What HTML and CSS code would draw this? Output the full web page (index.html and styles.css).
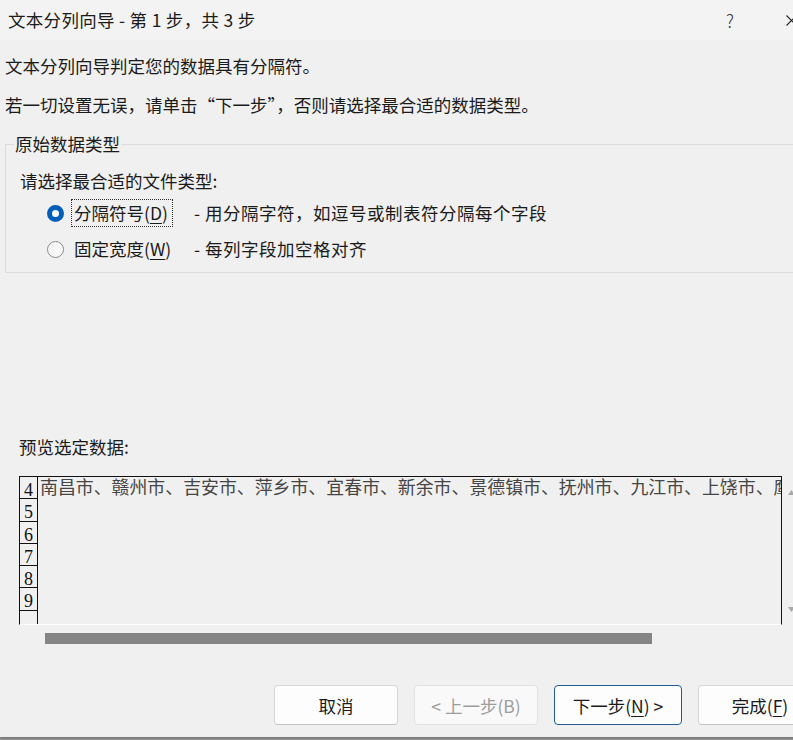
FILE: index.html
```html
<!DOCTYPE html>
<html lang="zh-CN">
<head>
    <meta charset="UTF-8">
    <title>文本分列向导 - 第 1 步，共 3 步</title>
    <link rel="stylesheet" href="styles.css">
</head>
<body>

<div class="dialog">
    <div class="titlebar">
        <span class="title">文本分列向导 - 第 1 步，共 3 步</span>
        <span class="tb-btn help">?</span>
        <span class="tb-btn close">
            <svg class="close-icon" width="11" height="11" viewBox="0 0 11 11"><path d="M0.5 0.5 L10.5 10.5 M10.5 0.5 L0.5 10.5" stroke="#222" stroke-width="1.1" fill="none"/></svg>
        </span>
    </div>

    <div class="content">
        <p class="line first">文本分列向导判定您的数据具有分隔符。</p>
        <p class="line">若一切设置无误，请单击“下一步”，否则请选择最合适的数据类型。</p>

        <fieldset class="group">
            <legend>原始数据类型</legend>
            <div class="prompt">请选择最合适的文件类型:</div>
            <div class="option">
                <span class="radio checked"></span>
                <span class="opt-label focused">分隔符号(<u>D</u>)</span>
                <span class="opt-desc">- 用分隔字符，如逗号或制表符分隔每个字段</span>
            </div>
            <div class="option">
                <span class="radio"></span>
                <span class="opt-label">固定宽度(<u>W</u>)</span>
                <span class="opt-desc">- 每列字段加空格对齐</span>
            </div>
        </fieldset>

        <div class="preview-label">预览选定数据:</div>

        <div class="preview-wrap">
            <div class="preview">
                <div class="row"><span class="num">4</span><span class="cell">南昌市、赣州市、吉安市、萍乡市、宜春市、新余市、景德镇市、抚州市、九江市、上饶市、鹰潭市</span></div>
                <div class="row"><span class="num">5</span><span class="cell"></span></div>
                <div class="row"><span class="num">6</span><span class="cell"></span></div>
                <div class="row"><span class="num">7</span><span class="cell"></span></div>
                <div class="row"><span class="num">8</span><span class="cell"></span></div>
                <div class="row"><span class="num">9</span><span class="cell"></span></div>
                <div class="row last"><span class="num"></span><span class="cell"></span></div>
            </div>
            <div class="vscroll">
                <svg width="7" height="5" viewBox="0 0 7 5"><path d="M3.5 0 L7 5 L0 5 Z" fill="#a8a8a8"/></svg>
                <svg width="7" height="5" viewBox="0 0 7 5"><path d="M0 0 L7 0 L3.5 5 Z" fill="#a8a8a8"/></svg>
            </div>
        </div>

        <div class="hscroll"><div class="thumb"></div></div>

        <div class="buttons">
            <button class="btn">取消</button>
            <button class="btn disabled">&lt; 上一步(B)</button>
            <button class="btn default">下一步(<u>N</u>) &gt;</button>
            <button class="btn">完成(<u>F</u>)</button>
        </div>
    </div>
</div>

</body>
</html>
```

FILE: styles.css
```css
html, body {
    margin: 0;
    height: 100%;
}
body {
    background: #9b9b9b;
    overflow: hidden;
    font-family: "Noto Sans CJK SC", "Noto Sans", sans-serif;
    font-size: 17.5px;
    color: #1b1b1b;
}
.dialog {
    width: 830px;
    height: 737px;
    background: #f0f0f0;
    box-shadow: 0 1px 3px rgba(0, 0, 0, 0.35);
}
.titlebar {
    height: 40px;
    background: #f3f3f3;
    display: flex;
    align-items: center;
    padding-left: 8px;
}
.title {
    line-height: 24px;
    flex: 1;
    letter-spacing: 0.3px;
}
.tb-btn {
    display: flex;
    align-items: center;
    justify-content: center;
    flex: none;
    width: 46px;
    height: 40px;
    color: #333;
    font-weight: 300;
}
.help {
    margin-right: 15px;
}
.close {
    margin-right: 16px;
}
.close-icon {
    display: block;
    flex: none;
}
.content {
    padding-left: 5px;
}
.line {
    margin: 15px 0 0;
    line-height: 24px;
}
.line.first {
    margin-top: 14px;
}
.group {
    margin: 15px 0 0;
    padding: 0 0 9px;
    border: 1px solid #dcdcdc;
    border-right: none;
    min-inline-size: 0;
}
.group legend {
    margin-left: 8px;
    padding: 0 1px;
    line-height: 24px;
}
.prompt {
    margin: 13px 0 0 14px;
    line-height: 24px;
}
.option {
    display: flex;
    align-items: center;
    height: 28px;
    margin: 6px 0 0 41px;
}
.option + .option {
    margin-top: 8px;
}
.radio {
    box-sizing: border-box;
    width: 17px;
    height: 17px;
    border-radius: 50%;
    border: 1px solid #8a8a8a;
    background: #f7f7f7;
}
.radio.checked {
    border: 5.5px solid #005fb8;
    background: #fff;
}
.opt-label {
    box-sizing: border-box;
    width: 102px;
    height: 28px;
    line-height: 26px;
    margin-left: 7px;
    padding-left: 2px;
    border: 1px solid transparent;
}
.opt-label.focused {
    border: 1px dotted #333;
}
.opt-desc {
    margin-left: 21px;
    line-height: 24px;
    letter-spacing: 0.5px;
}
u {
    text-underline-offset: 3px;
}
.preview-label {
    margin: 162px 0 0 14px;
    line-height: 24px;
}
.preview-wrap {
    display: flex;
    margin: 17px 0 0 14px;
}
.preview {
    width: 761px;
    height: 147px;
    border: 1px solid #111;
    border-bottom: 1px solid #fff;
    overflow: hidden;
    font-family: "Liberation Serif", "Noto Sans CJK SC", serif;
    color: #454545;
}
.row {
    display: flex;
    height: 22.3px;
}
.row.last {
    height: 40px;
}
.num {
    box-sizing: border-box;
    flex: none;
    width: 18px;
    border-right: 1px solid #111;
    border-bottom: 1px solid #111;
    font-size: 18px;
    line-height: 26px;
    text-align: center;
    color: #111;
}
.row.last .num {
    border-bottom: none;
}
.cell {
    flex: none;
    white-space: nowrap;
    font-size: 17.9px;
    line-height: 22px;
    padding-left: 2px;
}
.vscroll {
    width: 18px;
    height: 148px;
    display: flex;
    flex-direction: column;
    justify-content: space-between;
    align-items: center;
    padding: 14px 0 12px;
    box-sizing: border-box;
}
.hscroll {
    margin: 8px 0 0 40px;
    height: 11px;
}
.thumb {
    width: 607px;
    height: 11px;
    background: #858585;
}
.buttons {
    display: flex;
    gap: 16px;
    margin: 41px 0 0 269px;
}
.btn {
    width: 124px;
    height: 40px;
    flex: none;
    background: #fdfdfd;
    border: 1px solid #d6d6d6;
    border-bottom-color: #c2c2c2;
    border-radius: 4px;
    font-family: inherit;
    font-size: 17.5px;
    color: #1b1b1b;
    padding: 0;
}
.btn.disabled {
    background: #f9f9f9;
    border-color: #e2e2e2;
    color: #9d9d9d;
}
.btn.default {
    width: 128px;
    border: 1px solid #1f5e94;
}
```
